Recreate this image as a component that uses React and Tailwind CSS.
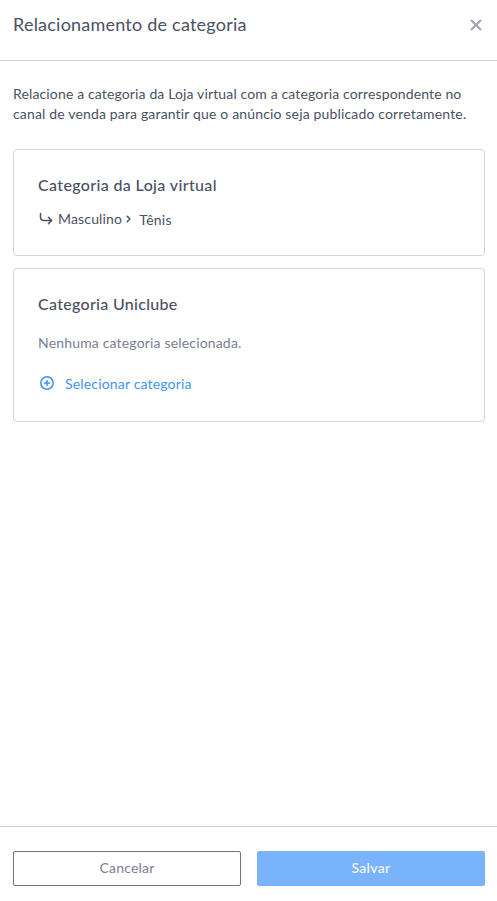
import React from "react";

const CloseIcon = () => (
  <svg width="12" height="12" viewBox="0 0 12 12" fill="none" stroke="currentColor" strokeWidth="2">
    <path d="M1 1l10 10M11 1L1 11" />
  </svg>
);

const ArrowReturnIcon = () => (
  <svg width="14" height="14" viewBox="0 0 14 14" fill="none" stroke="currentColor" strokeWidth="1.5" strokeLinecap="round" strokeLinejoin="round">
    <path d="M1.5 1.5v4a3 3 0 003 3h8M9.4 5.2l3.3 3.3-3.3 3.3" />
  </svg>
);

const ChevronIcon = () => (
  <svg width="6" height="8" viewBox="0 0 6 8" fill="none" stroke="currentColor" strokeWidth="1.5" strokeLinecap="round" strokeLinejoin="round">
    <path d="M1.2 1.3l2.7 2.7-2.7 2.7" />
  </svg>
);

const PlusCircleIcon = () => (
  <svg width="14" height="14" viewBox="0 0 14 14" fill="none" stroke="currentColor" strokeWidth="1.5">
    <circle cx="7" cy="7" r="6.2" />
    <path d="M7 4v6M4 7h6" />
  </svg>
);

const Card = ({ title, className, children }) => (
  <section className={`rounded-[4px] border border-[#d3d5de] px-6 pt-[23px] ${className}`}>
    {title}
    {children}
  </section>
);

const App = () => {
  return (
    <div className="flex h-screen flex-col bg-white font-['Lato',sans-serif] text-sm leading-5 text-[#4a5162]">
      <header className="flex h-[61px] shrink-0 items-start justify-between border-b border-[#d0d2dc] pt-[10px] pl-[13px] pr-[15px]">
        <h1 className="text-[18px] leading-7 tracking-[0.22px] whitespace-nowrap">Relacionamento de categoria</h1>
        <button type="button" aria-label="Fechar" className="mt-[9px] text-[#9ea3b0]">
          <CloseIcon />
        </button>
      </header>

      <main className="flex-1 pt-[23px] pr-3 pl-[13px]">
        <p className="mb-[25px] whitespace-nowrap">
          <span className="block tracking-[0.14px]">Relacione a categoria da Loja virtual com a categoria correspondente no</span>
          <span className="block tracking-[0.16px]">canal de venda para garantir que o anúncio seja publicado corretamente.</span>
        </p>

        <Card
          className="h-[107px]"
          title={<h2 className="text-base leading-6 font-medium tracking-[0.36px]">Categoria da Loja virtual</h2>}
        >
          <div className="mt-[11px] flex items-center">
            <span className="ml-[1px]">
              <ArrowReturnIcon />
            </span>
            <span className="ml-[5px] tracking-[0.16px]">Masculino</span>
            <span className="ml-1">
              <ChevronIcon />
            </span>
            <span className="ml-[7px] pt-[2px] tracking-[0.25px]">Tênis</span>
          </div>
        </Card>

        <Card
          className="mt-3 h-[154px]"
          title={<h2 className="text-base leading-6 font-medium tracking-[0.3px]">Categoria Uniclube</h2>}
        >
          <p className="mt-[17px] tracking-[0.17px] text-[#7b8090]">Nenhuma categoria selecionada.</p>
          <button type="button" className="mt-[21px] ml-[2px] flex items-center text-[#3e94fa]">
            <span className="-mt-[2px]">
              <PlusCircleIcon />
            </span>
            <span className="ml-[11px] tracking-[0.17px]">Selecionar categoria</span>
          </button>
        </Card>
      </main>

      <footer className="grid h-[75px] shrink-0 grid-cols-2 gap-4 border-t border-[#d0d2dc] pt-6 pr-3 pl-[13px]">
        <button type="button" className="h-[35px] rounded-[2px] border border-[#6e7488] pb-[2px] tracking-[0.2px] text-[#7b8090]">
          Cancelar
        </button>
        <button type="button" className="h-[35px] rounded-[2px] bg-[#78b3fb] pb-[2px] font-semibold tracking-[0.3px] text-[#eef5ff]">
          Salvar
        </button>
      </footer>
    </div>
  );
};

export default App;
